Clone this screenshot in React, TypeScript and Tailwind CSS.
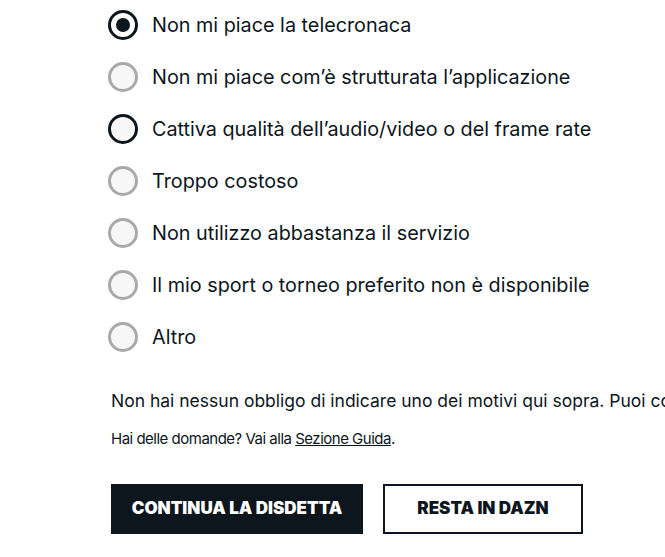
import React from "react";

const options = [
  { label: "Non mi piace la telecronaca", state: "checked" },
  { label: "Non mi piace com’è strutturata l’applicazione", state: "idle" },
  { label: "Cattiva qualità dell’audio/video o del frame rate", state: "hover" },
  { label: "Troppo costoso", state: "idle" },
  { label: "Non utilizzo abbastanza il servizio", state: "idle" },
  { label: "Il mio sport o torneo preferito non è disponibile", state: "idle" },
  { label: "Altro", state: "idle" },
];

function Radio({ state }: { state: string }) {
  if (state === "checked") {
    return (
      <span className="flex h-[30px] w-[30px] shrink-0 items-center justify-center rounded-full border-[3px] border-[#0c161c] bg-white">
        <span className="h-[14px] w-[14px] rounded-full bg-[#0c161c]" />
      </span>
    );
  }
  if (state === "hover") {
    return <span className="h-[30px] w-[30px] shrink-0 rounded-full border-[3px] border-[#0c161c] bg-[#f7f7f7]" />;
  }
  return <span className="h-[30px] w-[30px] shrink-0 rounded-full border-[3px] border-[#a9a9a9] bg-[#f7f7f7]" />;
}

export default function App() {
  return (
    <div
      className="h-[557px] w-[665px] overflow-hidden bg-white text-[#0c161c]"
      style={{ fontFamily: "Inter, 'Noto Sans', sans-serif" }}
    >
      <div className="flex flex-col pl-[108px] pt-[10px]">
        {options.map((o) => (
          <label key={o.label} className="flex h-[52px] items-center gap-[14px] whitespace-nowrap pb-[22px] pt-0">
            <Radio state={o.state} />
            <span className="text-[19.8px] leading-[30px]">{o.label}</span>
          </label>
        ))}
      </div>
      <div className="pl-[111px]">
        <p className="mt-[15px] whitespace-nowrap text-[17.5px] leading-[24px]">
          Non hai nessun obbligo di indicare uno dei motivi qui sopra. Puoi comunque continuare con la disdetta.
        </p>
        <p className="mt-[16px] whitespace-nowrap text-[15px] leading-[20px] tracking-[-0.5px]">
          Hai delle domande? Vai alla <a className="underline">Sezione Guida</a>.
        </p>
        <div className="mt-[35px] flex gap-[20px]">
          <button className="flex h-[50px] w-[252px] items-center justify-center bg-[#0c161c] text-[17px] font-black uppercase text-white">
            Continua la disdetta
          </button>
          <button className="flex h-[50px] w-[200px] items-center justify-center border-2 border-[#0c161c] bg-white text-[17px] font-black uppercase text-[#0c161c]">
            Resta in DAZN
          </button>
        </div>
      </div>
    </div>
  );
}
